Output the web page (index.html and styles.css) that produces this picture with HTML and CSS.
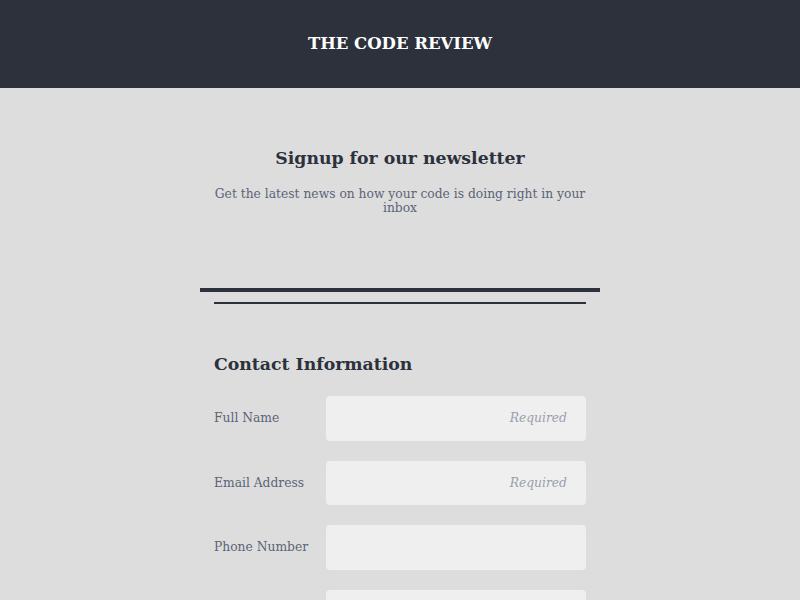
FILE: index.html
```html
<!DOCTYPE html>
<html lang="en">
<head>
<meta charset="utf-8">
<title>The Code Review</title>
<link rel="stylesheet" href="styles.css">
</head>
<body>
<header class="site-header">
  <h1 class="site-title">THE CODE REVIEW</h1>
</header>
<main class="container">
  <section class="intro">
    <h2 class="intro-title">Signup for our newsletter</h2>
    <p class="intro-text">Get the latest news on how your code is doing right in your inbox</p>
  </section>
  <div class="rule-thick"></div>
  <form class="form">
    <div class="rule-thin"></div>
    <h3 class="form-title">Contact Information</h3>
    <div class="field">
      <label class="field-label" for="name">Full Name</label>
      <input class="field-input" id="name" type="text" placeholder="Required">
    </div>
    <div class="field">
      <label class="field-label" for="email">Email Address</label>
      <input class="field-input" id="email" type="email" placeholder="Required">
    </div>
    <div class="field">
      <label class="field-label" for="phone">Phone Number</label>
      <input class="field-input" id="phone" type="tel">
    </div>
    <div class="field">
      <label class="field-label" for="street">Street Address</label>
      <input class="field-input" id="street" type="text">
    </div>
  </form>
</main>
</body>
</html>
```

FILE: styles.css
```css
* { box-sizing: border-box; }
html, body { margin: 0; padding: 0; }
body {
  background: #dddddd;
  font-family: "DejaVu Serif", "Liberation Serif", serif;
  color: #2c313c;
}
.site-header {
  background: #2c313c;
  height: 88px;
  display: flex;
  align-items: center;
  justify-content: center;
  padding-bottom: 2px;
}
.site-title {
  margin: 0;
  color: #ffffff;
  font-size: 16.5px;
  font-weight: bold;
}
.container {
  width: 400px;
  margin: 0 auto;
}
.intro {
  text-align: center;
  padding: 58px 12px 0;
  height: 200px;
}
.intro-title {
  margin: 0;
  font-size: 17.3px;
  font-weight: bold;
  line-height: 24px;
}
.intro-text {
  margin: 17px 0 0;
  font-size: 12.3px;
  line-height: 14px;
  color: #5b6477;
}
.rule-thick {
  height: 4px;
  background: #2c313c;
}
.form {
  padding: 10px 14px 0;
}
.rule-thin {
  height: 2px;
  background: #2c313c;
}
.form-title {
  margin: 48px 0 0;
  font-size: 17.3px;
  font-weight: bold;
  line-height: 24px;
}
.field {
  display: flex;
  align-items: center;
  margin-top: 20px;
}
.field-label {
  width: 112px;
  font-size: 12.3px;
  color: #5b6477;
}
.field-input {
  width: 260px;
  height: 44.5px;
  border: none;
  border-radius: 4px;
  background: #efefef;
  padding: 0 19px;
  font-family: inherit;
  font-size: 12.3px;
  text-align: right;
  outline: none;
}
.field-input::placeholder {
  color: #9aa0aa;
  font-style: italic;
}
```
